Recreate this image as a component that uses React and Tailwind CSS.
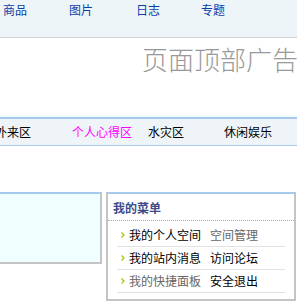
import React from "react";

function Bullet() {
  return (
    <svg width="4" height="6" viewBox="0 0 4 6" className="shrink-0">
      <path d="M0.5 0.5 L3 3 L0.5 5.5" fill="none" stroke="#a8c400" strokeWidth="1.2" />
    </svg>
  );
}

export default function App() {
  const rows = [
    ["我的个人空间", "text-black", "空间管理", "text-[#666]"],
    ["我的站内消息", "text-black", "访问论坛", "text-black"],
    ["我的快捷面板", "text-[#666]", "安全退出", "text-black"],
  ];
  return (
    <div className="w-[297px] h-[302px] overflow-hidden bg-white font-['Noto_Sans_CJK_SC',sans-serif] text-[12px] leading-[14px]">
      {/* top nav */}
      <div className="h-[38px] bg-[#eef5f8] border-b border-[#d4d4d4] flex pl-[3px] pt-[3px] text-[#0b3ea8]">
        <div className="w-[66px]">商品</div>
        <div className="w-[67px]">图片</div>
        <div className="w-[65px]">日志</div>
        <div>专题</div>
      </div>
      {/* ad */}
      <div className="h-[77px] pl-[142px] pt-[8px] whitespace-nowrap text-[26px] leading-[26px] text-[#999] font-light overflow-hidden">
        页面顶部广告
      </div>
      {/* sub nav */}
      <div className="h-[2px] bg-[#f0fbff]" />
      <div className="h-[29px] bg-[#eef4f7] border-t-2 border-b border-[#a6c9ec] flex items-center whitespace-nowrap -ml-[5px] pb-[1px]">
        <div className="w-[77px] text-black">外来区</div>
        <div className="w-[76px] text-[#ff00ff]">个人心得区</div>
        <div className="w-[76px] text-black">水灾区</div>
        <div className="text-black">休闲娱乐</div>
      </div>
      {/* content */}
      <div className="flex items-start mt-[46px]">
        <div className="w-[102px] h-[72px] bg-[#f0ffff] border-t-2 border-t-[#a6c9ec] border-r-2 border-b-2 border-r-[#c4c4c4] border-b-[#c4c4c4]" />
        <div className="ml-[4px] w-[190px] h-[109px] bg-white border-t-2 border-t-[#a6c9ec] border-l-2 border-r-2 border-b-2 border-l-[#c4c4c4] border-r-[#c4c4c4] border-b-[#c4c4c4]">
          <div className="h-[27px] border-b border-dotted border-[#aaa] pl-[5px] pt-[7px] font-bold text-[#3d4a8c]">
            我的菜单
          </div>
          <div className="pt-[3px] px-[9px]">
            {rows.map(([a, ac, b, bc]) => (
              <div key={a} className="h-[23px] border-b border-[#e2e2e2] flex items-center">
                <div className="w-[12px] flex justify-start pl-[4px]">
                  <Bullet />
                </div>
                <div className={"w-[81px] " + ac}>{a}</div>
                <div className={bc}>{b}</div>
              </div>
            ))}
          </div>
        </div>
      </div>
    </div>
  );
}
